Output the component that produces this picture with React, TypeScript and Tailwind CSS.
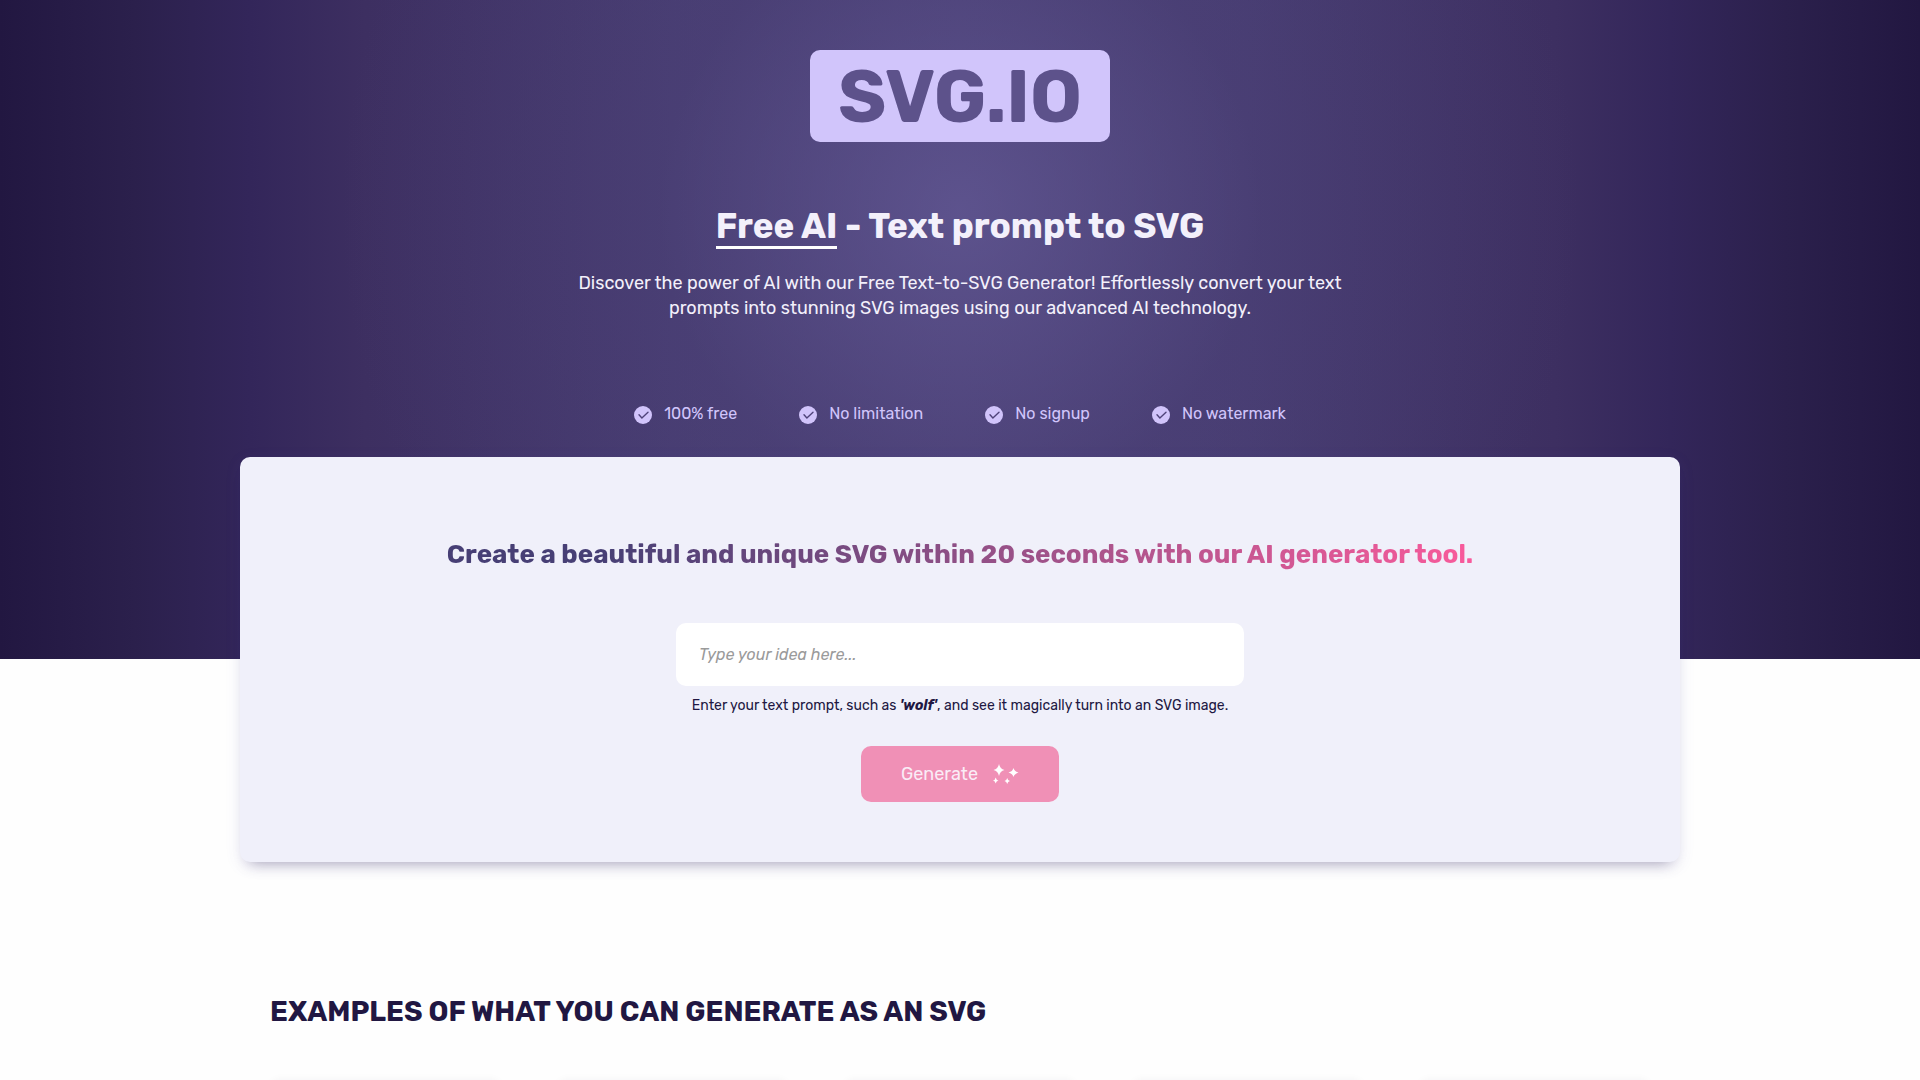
import { useState } from "react";

const features = ["100% free", "No limitation", "No signup", "No watermark"];
const examples = ["Wolf", "Rocket", "Flower", "Castle", "Robot"];

function CheckIcon() {
  return (
    <svg className="mt-0.5 size-[18px] shrink-0" viewBox="0 0 18 18" aria-hidden="true">
      <circle cx="9" cy="9" r="9" fill="#d1c4fb" />
      <path
        d="M5 8.8l2.9 3.2L14 6.2"
        fill="none"
        stroke="#4f437a"
        strokeWidth="1.4"
        strokeLinecap="round"
        strokeLinejoin="round"
      />
    </svg>
  );
}

function SparklesIcon() {
  return (
    <svg className="h-5 w-[26px] shrink-0" viewBox="0 0 26 20" fill="#fff" aria-hidden="true">
      <path d="M6 0Q7 5 11.5 6Q7 7 6 12Q5 7 0.5 6Q5 5 6 0Z" />
      <path d="M20.5 4Q21.4 7.5 25.5 8.5Q21.4 9.5 20.5 13Q19.6 9.5 15.5 8.5Q19.6 7.5 20.5 4Z" />
      <path d="M2.7 13.5Q3.2 16 5.5 16.5Q3.2 17 2.7 19.5Q2.2 17 0 16.5Q2.2 16 2.7 13.5Z" />
      <path d="M14.2 14Q14.7 16.5 17 17Q14.7 17.5 14.2 20Q13.7 17.5 11.5 17Q13.7 16.5 14.2 14Z" />
    </svg>
  );
}

export default function App() {
  const [idea, setIdea] = useState("");

  return (
    <div className="h-screen overflow-hidden bg-[#fefefe] font-['Rubik','Inter',sans-serif] text-[#211742]">
      <header className="bg-[radial-gradient(circle_at_50%_210px,rgba(99,89,149,0.75),rgba(80,70,125,0.3)_300px,transparent_620px),linear-gradient(90deg,#221741,#2b204c_7%,#33265a_13%,#3d2f61_19%,#463b70_35%,#4a3f75_50%,#463b70_65%,#3d2f61_81%,#33265a_87%,#2b204c_93%,#221741)] px-6 pt-[50px] pb-[233px] text-center text-[#f3f0fb]">
        <a
          href="#home"
          className="mx-auto flex h-[92px] w-[300px] items-center justify-center rounded-[10px] bg-[#d1c5fb] pt-1 text-[73px] font-bold text-[#5d528b]"
        >
          SVG.IO
        </a>
        <h1 className="mt-16 text-[35px] leading-10 font-bold">
          <span className="inline-block border-b-3 border-white">Free AI</span> - Text prompt to SVG
        </h1>
        <p className="mx-auto mt-[22px] max-w-[800px] text-[18px] leading-[25px]">
          Discover the power of AI with our Free Text-to-SVG Generator! Effortlessly convert your text prompts into
          stunning SVG images using our advanced AI technology.
        </p>
        <ul className="mt-[81px] flex flex-wrap justify-center gap-x-[62px] text-[16px] leading-6 text-[#d1c5fb]">
          {features.map((feature) => (
            <li key={feature} className="flex items-center gap-3">
              <CheckIcon />
              {feature}
            </li>
          ))}
        </ul>
      </header>

      <main className="mx-auto -mt-[202px] max-w-[1440px]">
        <form
          onSubmit={(event) => event.preventDefault()}
          className="flex flex-col items-center rounded-[10px] bg-[#f0f0fa] px-6 pt-20 pb-[60px] shadow-[0_10px_14px_-10px_rgba(33,23,66,0.4),0_4px_16px_rgba(93,82,200,0.1)]"
        >
          <h2 className="bg-linear-to-r from-[#473f75] from-15% to-[#f95a9b] bg-clip-text text-[26px] leading-9 font-bold text-transparent">
            Create a beautiful and unique SVG within 20 seconds with our AI generator tool.
          </h2>
          <input
            id="idea"
            type="text"
            value={idea}
            onChange={(event) => setIdea(event.target.value)}
            placeholder="Type your idea here..."
            aria-label="Your idea"
            className="mt-[50px] h-[63px] w-full max-w-[568px] rounded-[10px] bg-white px-[23px] text-[16px] outline-none placeholder:text-[#9a9a9a] placeholder:italic"
          />
          <label htmlFor="idea" className="mt-2 text-[14px] leading-6">
            Enter your text prompt, such as <b className="font-bold italic">'wolf'</b>, and see it magically turn into
            an SVG image.
          </label>
          <button
            type="submit"
            className="mt-7 flex h-14 items-center gap-[15px] rounded-[10px] bg-[#f090b6] px-10 text-[18px] text-[#faecf6]"
          >
            Generate
            <SparklesIcon />
          </button>
        </form>

        <section className="px-[30px] pt-[130px]">
          <h2 className="text-[28px] leading-10 font-bold uppercase">Examples of what you can generate as an SVG</h2>
          <ul className="mt-12 grid grid-cols-5 gap-14">
            {examples.map((example) => (
              <li key={example} aria-label={example} className="h-60 rounded-[10px] bg-[#fefefe] shadow-[0_0_8px_rgba(33,23,66,0.05)]" />
            ))}
          </ul>
        </section>
      </main>
    </div>
  );
}
